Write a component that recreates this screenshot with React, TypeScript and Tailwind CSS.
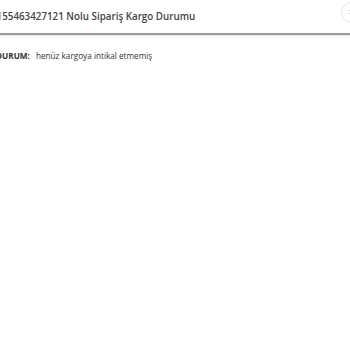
export default function App() {
	return (
		<div className="h-[350px] w-[350px] overflow-hidden bg-white font-['Open_Sans',sans-serif]">
			<div className="ml-[-10px] w-[374px]">
				{/* Header */}
				<div className="flex h-[35px] items-center justify-between border-b-2 border-[#9c9c9c] pl-[1px] pr-[2px] shadow-[0_1px_2px_rgba(0,0,0,0.12)]">
					<h2 className="pt-[1px] text-[9.8px] font-semibold text-[#444]">
						2155463427121 Nolu Sipariş Kargo Durumu
					</h2>
					<button className="mb-[8px] flex h-[21px] w-[21px] items-center justify-center rounded-full border border-[#e2e2e2] text-[11px] text-[#c4c4c4]">
						×
					</button>
				</div>

				{/* Body */}
				<div className="flex items-center gap-[6px] pl-[6px] pt-[15px] text-[8.2px] text-[#333]">
					<span className="font-bold">DURUM:</span>
					<span>henüz kargoya intikal etmemiş</span>
				</div>
			</div>
		</div>
	);
}
